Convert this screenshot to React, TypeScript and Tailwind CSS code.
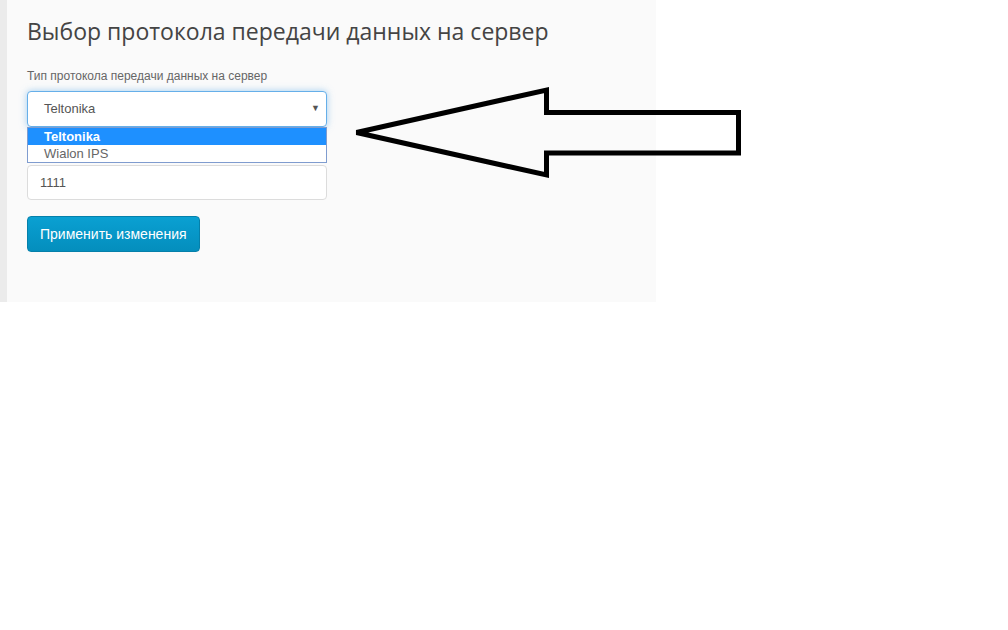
const options = ["Teltonika", "Wialon IPS"];

export default function App() {
  return (
    <div className="relative h-[630px] w-[1008px] bg-white">
      <div className="flex h-[302px] w-[656px]">
        <div className="w-[7px] bg-[#ebebeb]" />
        <div className="flex-1 bg-[#fafafa] pl-[20px] pt-[15px]">
          <h1 className="font-['Open_Sans',sans-serif] text-[23px] leading-[32px] font-normal text-[#444]">
            Выбор протокола передачи данных на сервер
          </h1>

          <label className="mt-[21px] block font-['Liberation_Sans',Arial,sans-serif] text-[12px] leading-[17px] text-[#666]">
            Тип протокола передачи данных на сервер
          </label>

          <div className="relative mt-[6px] w-[300px] font-['Liberation_Sans',Arial,sans-serif]">
            <div className="flex h-[36px] items-center justify-between rounded-[4px] border border-[#66afe9] bg-white pl-[16px] pr-[6px] text-[13px] text-[#555] shadow-[0_0_7px_rgba(102,175,233,0.6)]">
              <span>Teltonika</span>
              <span className="text-[9px] text-[#555]">▼</span>
            </div>
            <ul className="absolute top-[36px] left-0 z-10 w-[300px] border border-[#7f9ccf] bg-white text-[13px] leading-[17px]">
              {options.map((opt, i) => (
                <li
                  key={opt}
                  className={
                    i === 0
                      ? "bg-[#1e90ff] pl-[16px] font-semibold text-white"
                      : "pl-[16px] text-[#666]"
                  }
                >
                  {opt}
                </li>
              ))}
            </ul>
          </div>

          <div className="mt-[38px] flex h-[35px] w-[300px] items-center rounded-[4px] border border-[#dcdcdc] bg-white pl-[12px] font-['Liberation_Sans',Arial,sans-serif] text-[13px] text-[#555]">
            1111
          </div>

          <button className="mt-[16px] h-[36px] rounded-[4px] border border-[#0580aa] bg-gradient-to-b from-[#0aa0d2] to-[#048ebd] px-[12px] font-['Liberation_Sans',Arial,sans-serif] text-[14px] text-white">
            Применить изменения
          </button>
        </div>
      </div>

      <svg
        className="pointer-events-none absolute top-0 left-0"
        width="1008"
        height="630"
        viewBox="0 0 1008 630"
      >
        <polygon
          points="356.5,132.5 546.5,90 546.5,112.5 738.5,112.5 738.5,153 546.5,153 546.5,175"
          fill="none"
          stroke="#000"
          strokeWidth="5"
        />
      </svg>
    </div>
  );
}
